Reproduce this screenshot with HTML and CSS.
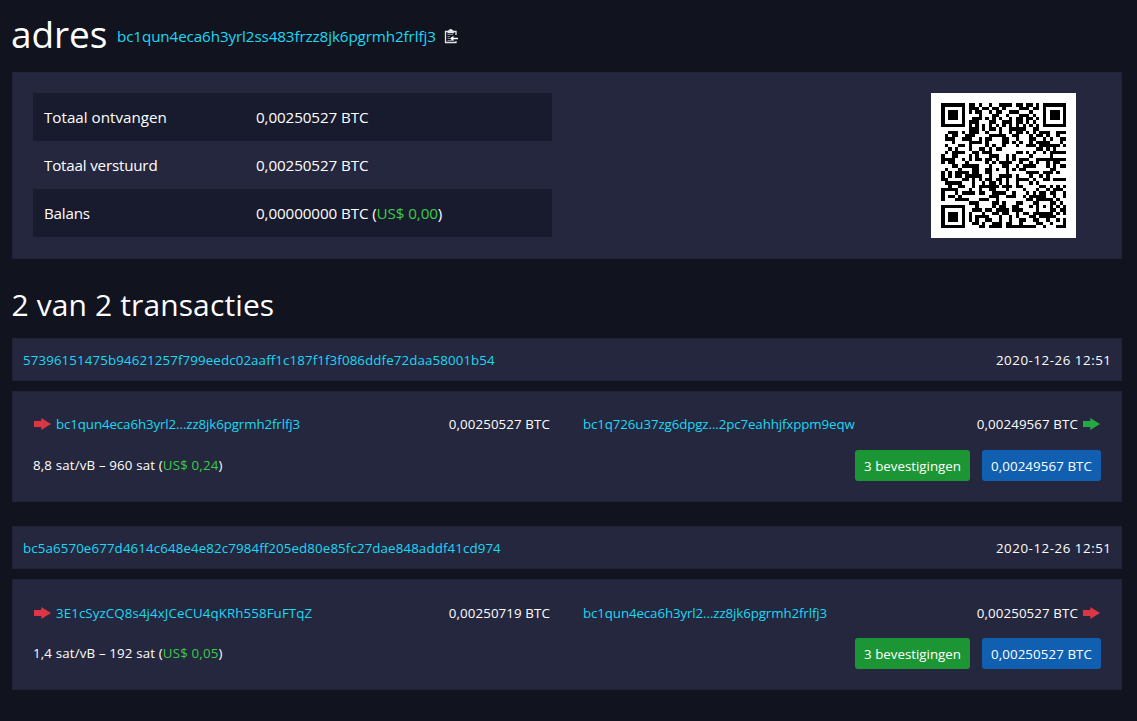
FILE: index.html
```html
<!DOCTYPE html>
<html lang="nl">
<head>
<meta charset="utf-8">
<title>adres</title>
<link rel="stylesheet" href="styles.css">
</head>
<body>
<svg class="defs" width="0" height="0"><symbol id="arrow" viewBox="0 0 17 12"><path d="M0 3h7.300V0L17 6l-9.700 6V9H0z" fill="currentColor"/></symbol></svg>
<main class="page">
  <header class="title">
    <h1>adres</h1>
    <a class="address">bc1qun4eca6h3yrl2ss483frzz8jk6pgrmh2frlfj3</a>
    <svg class="clipboard" viewBox="0 0 14 15" fill="none" stroke="#e4e4e8">
      <path d="M12 6V2.500H1.500v11H12V12" stroke-width="1.300"/>
      <path d="M3.500 3.500h6.500M4.500 1.800h4.500L6.700.6z" stroke-width="1.400"/>
      <path d="M3.500 5.500H9M3.500 7.500H6M3.500 9.500H6M3.500 11.500h5" stroke="#85868f"/>
      <path d="M14 9.500H7" stroke="#fff" stroke-width="1.500"/>
      <path d="M6 9.500L9.500 6.800v5.400z" fill="#fff" stroke="none"/>
    </svg>
  </header>
  <section class="box summary">
    <div class="stats">
      <div class="stat odd"><span class="wide">Totaal ontvangen</span><span>0,00250527 BTC</span></div>
      <div class="stat"><span>Totaal verstuurd</span><span>0,00250527 BTC</span></div>
      <div class="stat odd"><span>Balans</span><span>0,00000000 BTC (<span class="fiat">US$ 0,00</span>)</span></div>
    </div>
    <div class="qr"><svg width="125" height="125" viewBox="0 0 125 125" shape-rendering="crispEdges"><path id="qr-path"/></svg></div>
  </section>
  <h2>2 van 2 transacties</h2>
  <article class="tx">
    <div class="box tx-head"><a class="hash">57396151475b94621257f799eedc02aaff1c187f1f3f086ddfe72daa58001b54</a><span class="date">2020-12-26 12:51</span></div>
    <div class="box tx-body">
      <div class="flows">
        <div class="flow"><svg class="arrow red"><use href="#arrow"/></svg><a>bc1qun4eca6h3yrl2...zz8jk6pgrmh2frlfj3</a><span class="amount">0,00250527 BTC</span></div>
        <div class="flow"><a>bc1q726u37zg6dpgz...2pc7eahhjfxppm9eqw</a><span class="amount">0,00249567 BTC</span><svg class="arrow green"><use href="#arrow"/></svg></div>
      </div>
      <div class="tx-foot"><span class="fee">8,8 sat/vB – 960 sat (<span class="fiat">US$ 0,24</span>)</span><button class="confirm">3 bevestigingen</button><button class="total">0,00249567 BTC</button></div>
    </div>
  </article>
  <article class="tx">
    <div class="box tx-head"><a class="hash">bc5a6570e677d4614c648e4e82c7984ff205ed80e85fc27dae848addf41cd974</a><span class="date">2020-12-26 12:51</span></div>
    <div class="box tx-body">
      <div class="flows">
        <div class="flow"><svg class="arrow red"><use href="#arrow"/></svg><a class="legacy">3E1cSyzCQ8s4j4xJCeCU4qKRh558FuFTqZ</a><span class="amount">0,00250719 BTC</span></div>
        <div class="flow"><a>bc1qun4eca6h3yrl2...zz8jk6pgrmh2frlfj3</a><span class="amount">0,00250527 BTC</span><svg class="arrow red"><use href="#arrow"/></svg></div>
      </div>
      <div class="tx-foot"><span class="fee">1,4 sat/vB – 192 sat (<span class="fiat">US$ 0,05</span>)</span><button class="confirm">3 bevestigingen</button><button class="total">0,00250527 BTC</button></div>
    </div>
  </article>
</main>
<script src="qr.js"></script>
</body>
</html>
```

FILE: styles.css
```css
* { box-sizing: border-box; }
body {
  margin: 0;
  background: #11131f;
  color: #fff;
  font: 13.3px/21px "Open Sans", "Noto Sans", sans-serif;
  letter-spacing: 0.12px;
  overflow: hidden;
}
.defs { display: block; }
.page { width: 1110px; margin: 0 0 0 12px; white-space: nowrap; }
a { color: #1bd8f4; }
.title { display: flex; align-items: center; height: 72px; }
h1 { width: 106px; margin: 0 0 0 -1px; font-size: 37px; line-height: 48px; font-weight: 400; letter-spacing: -0.1px; padding-bottom: 4px; }
.address { font-size: 15.2px; letter-spacing: -0.1px; }
.clipboard { width: 14px; height: 15px; margin-left: 8.5px; }
.box { background: #24273e; border: 1px solid #202338; }
.summary { display: flex; justify-content: space-between; height: 187px; padding: 20px 45px 20px 20px; }
.stats { width: 519px; font-size: 15.2px; letter-spacing: -0.1px; }
.stat { display: grid; grid-template-columns: 212px 1fr; height: 48px; padding-left: 11px; line-height: 49px; }
.stat > span:first-child { letter-spacing: -0.2px; }
.stat > .wide:first-child { letter-spacing: 0; }
.odd { background: #181b2d; }
.fiat { color: #3bcc49; }
.qr { width: 145px; height: 145px; padding: 10px; background: #fff; }
.qr svg { display: block; }
h2 { margin: 25px 0 12px -0.5px; height: 42px; font-size: 30px; line-height: 42px; font-weight: 400; }
.tx { margin-bottom: 24px; }
.tx-head { display: flex; justify-content: space-between; height: 43px; padding: 0 10px; line-height: 42px; }
.hash { letter-spacing: 0.12px; }
.date { letter-spacing: 0.55px; margin-right: -0.5px; }
.tx-body { height: 111px; margin-top: 10px; padding: 22px 20px 0; }
.flows { display: grid; grid-template-columns: 517px 518px; column-gap: 33px; }
.tx + .tx .flows { padding-top: 1px; margin-bottom: -1px; }
.flow { display: flex; align-items: center; height: 21px; }
.flow a { letter-spacing: -0.1px; }
.flow .legacy { letter-spacing: 0.1px; }
.arrow { width: 17px; height: 12px; flex: none; margin-bottom: 1px; }
.flow > .arrow:first-child { margin: 0 5px 1px 1px; }
.amount { margin-left: auto; }
.amount + .arrow { margin-left: 5px; margin-right: 1px; }
.red { color: #dc3545; }
.green { color: #28a745; }
.tx-foot { display: flex; align-items: flex-start; gap: 12px; margin-top: 15px; }
.fee { margin-right: auto; line-height: 31px; letter-spacing: 0.16px; }
button { height: 31px; padding: 1px 0 0; border: 0; border-radius: 3px; color: #fff; font: inherit; letter-spacing: 0.1px; }
.confirm { width: 115px; background: #1c9635; letter-spacing: 0; }
.total { width: 119px; background: #105fb0; }
```

FILE: qr.js
```js
// Draws a version 5, level H QR code (byte mode, mask 2) of the page's address.
(function () {
  const text = document.querySelector('.address').textContent;
  const N = 37, EC = 22, CAP = 46, MASK = 2;

  let bits = '0100' + text.length.toString(2).padStart(8, '0');
  for (const c of text) bits += c.charCodeAt(0).toString(2).padStart(8, '0');
  bits += '0000';
  const data = bits.match(/.{8}/g).map(b => parseInt(b, 2));
  for (let p = 0xec; data.length < CAP; p ^= 0xec ^ 0x11) data.push(p);

  const mul = (a, b) => {
    let r = 0;
    for (let i = 7; i >= 0; i--) {
      r = (r << 1) ^ ((r >> 7) * 0x11d);
      r ^= ((b >> i) & 1) * a;
    }
    return r;
  };
  const gen = new Array(EC).fill(0);
  gen[EC - 1] = 1;
  let root = 1;
  for (let i = 0; i < EC; i++) {
    for (let j = 0; j < EC; j++) {
      gen[j] = mul(gen[j], root);
      if (j + 1 < EC) gen[j] ^= gen[j + 1];
    }
    root = mul(root, 2);
  }
  const remainder = d => {
    const r = new Array(EC).fill(0);
    for (const b of d) {
      const f = b ^ r.shift();
      r.push(0);
      gen.forEach((g, i) => { r[i] ^= mul(g, f); });
    }
    return r;
  };
  const blocks = [data.slice(0, 11), data.slice(11, 22), data.slice(22, 34), data.slice(34, 46)];
  const ecs = blocks.map(remainder);
  const words = [];
  for (let i = 0; i < 12; i++) for (const b of blocks) if (i < b.length) words.push(b[i]);
  for (let i = 0; i < EC; i++) for (const e of ecs) words.push(e[i]);

  const m = Array.from({ length: N }, () => new Array(N).fill(0));
  const fixed = Array.from({ length: N }, () => new Array(N).fill(false));
  const set = (x, y, v) => {
    if (x < 0 || y < 0 || x >= N || y >= N) return;
    m[y][x] = v ? 1 : 0;
    fixed[y][x] = true;
  };
  for (let i = 0; i < N; i++) { set(6, i, i % 2 === 0); set(i, 6, i % 2 === 0); }
  for (const [cx, cy] of [[3, 3], [N - 4, 3], [3, N - 4]])
    for (let dy = -4; dy <= 4; dy++) for (let dx = -4; dx <= 4; dx++) {
      const d = Math.max(Math.abs(dx), Math.abs(dy));
      set(cx + dx, cy + dy, d !== 2 && d !== 4);
    }
  for (let dy = -2; dy <= 2; dy++) for (let dx = -2; dx <= 2; dx++)
    set(30 + dx, 30 + dy, Math.max(Math.abs(dx), Math.abs(dy)) !== 1);

  const d5 = (2 << 3) | MASK;
  let r = d5;
  for (let i = 0; i < 10; i++) r = (r << 1) ^ ((r >> 9) * 0x537);
  const f = ((d5 << 10) | r) ^ 0x5412;
  const b = i => (f >> i) & 1;
  for (let i = 0; i <= 5; i++) set(8, i, b(i));
  set(8, 7, b(6)); set(8, 8, b(7)); set(7, 8, b(8));
  for (let i = 9; i < 15; i++) set(14 - i, 8, b(i));
  for (let i = 0; i < 8; i++) set(N - 1 - i, 8, b(i));
  for (let i = 8; i < 15; i++) set(8, N - 15 + i, b(i));
  set(8, N - 8, 1);

  let k = 0;
  for (let right = N - 1; right >= 1; right -= 2) {
    if (right === 6) right = 5;
    for (let v = 0; v < N; v++) for (let j = 0; j < 2; j++) {
      const x = right - j;
      const y = ((right + 1) & 2) === 0 ? N - 1 - v : v;
      if (fixed[y][x]) continue;
      const bit = k < words.length * 8 ? (words[k >> 3] >> (7 - (k & 7))) & 1 : 0;
      m[y][x] = bit ^ (x % 3 === 0 ? 1 : 0);
      k++;
    }
  }

  const at = i => Math.ceil(i * 125 / N);
  let d = '';
  for (let y = 0; y < N; y++) for (let x = 0; x < N; x++)
    if (m[y][x]) d += `M${at(x)} ${at(y)}H${at(x + 1)}V${at(y + 1)}H${at(x)}z`;
  document.getElementById('qr-path').setAttribute('d', d);
})();
```
